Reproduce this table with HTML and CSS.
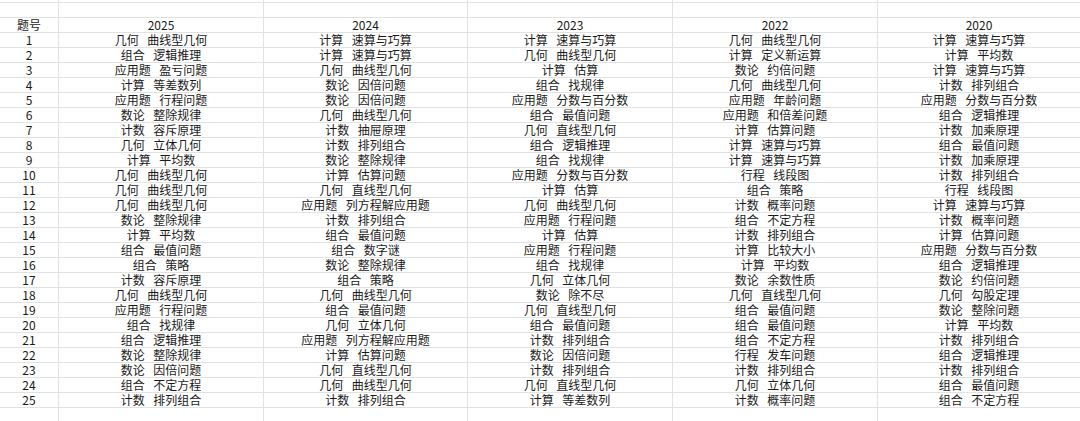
FILE: index.html
```html
<!DOCTYPE html>
<html lang="zh-CN">
<head>
<meta charset="utf-8">
<title>题号统计</title>
<link rel="stylesheet" href="styles.css">
</head>
<body>
<div class="sheet">
  <div class="row top"><div class="c"></div><div class="c"></div><div class="c"></div><div class="c"></div><div class="c"></div><div class="c"></div></div>
  <div class="row"><div class="c"></div><div class="c"></div><div class="c"></div><div class="c"></div><div class="c"></div><div class="c"></div></div>
  <div class="row"><div class="c">题号</div><div class="c">2025</div><div class="c">2024</div><div class="c">2023</div><div class="c">2022</div><div class="c">2020</div></div>
  <div class="row"><div class="c">1</div><div class="c">几何 曲线型几何</div><div class="c">计算 速算与巧算</div><div class="c">计算 速算与巧算</div><div class="c">几何 曲线型几何</div><div class="c">计算 速算与巧算</div></div>
  <div class="row"><div class="c">2</div><div class="c">组合 逻辑推理</div><div class="c">计算 速算与巧算</div><div class="c">几何 曲线型几何</div><div class="c">计算 定义新运算</div><div class="c">计算 平均数</div></div>
  <div class="row"><div class="c">3</div><div class="c">应用题 盈亏问题</div><div class="c">几何 曲线型几何</div><div class="c">计算 估算</div><div class="c">数论 约倍问题</div><div class="c">计算 速算与巧算</div></div>
  <div class="row"><div class="c">4</div><div class="c">计算 等差数列</div><div class="c">数论 因倍问题</div><div class="c">组合 找规律</div><div class="c">几何 曲线型几何</div><div class="c">计数 排列组合</div></div>
  <div class="row"><div class="c">5</div><div class="c">应用题 行程问题</div><div class="c">数论 因倍问题</div><div class="c">应用题 分数与百分数</div><div class="c">应用题 年龄问题</div><div class="c">应用题 分数与百分数</div></div>
  <div class="row"><div class="c">6</div><div class="c">数论 整除规律</div><div class="c">几何 曲线型几何</div><div class="c">组合 最值问题</div><div class="c">应用题 和倍差问题</div><div class="c">组合 逻辑推理</div></div>
  <div class="row"><div class="c">7</div><div class="c">计数 容斥原理</div><div class="c">计数 抽屉原理</div><div class="c">几何 直线型几何</div><div class="c">计算 估算问题</div><div class="c">计数 加乘原理</div></div>
  <div class="row"><div class="c">8</div><div class="c">几何 立体几何</div><div class="c">计数 排列组合</div><div class="c">组合 逻辑推理</div><div class="c">计算 速算与巧算</div><div class="c">组合 最值问题</div></div>
  <div class="row"><div class="c">9</div><div class="c">计算 平均数</div><div class="c">数论 整除规律</div><div class="c">组合 找规律</div><div class="c">计算 速算与巧算</div><div class="c">计数 加乘原理</div></div>
  <div class="row"><div class="c">10</div><div class="c">几何 曲线型几何</div><div class="c">计算 估算问题</div><div class="c">应用题 分数与百分数</div><div class="c">行程 线段图</div><div class="c">计数 排列组合</div></div>
  <div class="row"><div class="c">11</div><div class="c">几何 曲线型几何</div><div class="c">几何 直线型几何</div><div class="c">计算 估算</div><div class="c">组合 策略</div><div class="c">行程 线段图</div></div>
  <div class="row"><div class="c">12</div><div class="c">几何 曲线型几何</div><div class="c">应用题 列方程解应用题</div><div class="c">几何 曲线型几何</div><div class="c">计数 概率问题</div><div class="c">计算 速算与巧算</div></div>
  <div class="row"><div class="c">13</div><div class="c">数论 整除规律</div><div class="c">计数 排列组合</div><div class="c">应用题 行程问题</div><div class="c">组合 不定方程</div><div class="c">计数 概率问题</div></div>
  <div class="row"><div class="c">14</div><div class="c">计算 平均数</div><div class="c">组合 最值问题</div><div class="c">计算 估算</div><div class="c">计数 排列组合</div><div class="c">计算 估算问题</div></div>
  <div class="row"><div class="c">15</div><div class="c">组合 最值问题</div><div class="c">组合 数字谜</div><div class="c">应用题 行程问题</div><div class="c">计算 比较大小</div><div class="c">应用题 分数与百分数</div></div>
  <div class="row"><div class="c">16</div><div class="c">组合 策略</div><div class="c">数论 整除规律</div><div class="c">组合 找规律</div><div class="c">计算 平均数</div><div class="c">组合 逻辑推理</div></div>
  <div class="row"><div class="c">17</div><div class="c">计数 容斥原理</div><div class="c">组合 策略</div><div class="c">几何 立体几何</div><div class="c">数论 余数性质</div><div class="c">数论 约倍问题</div></div>
  <div class="row"><div class="c">18</div><div class="c">几何 曲线型几何</div><div class="c">几何 曲线型几何</div><div class="c">数论 除不尽</div><div class="c">几何 直线型几何</div><div class="c">几何 勾股定理</div></div>
  <div class="row"><div class="c">19</div><div class="c">应用题 行程问题</div><div class="c">组合 最值问题</div><div class="c">几何 直线型几何</div><div class="c">组合 最值问题</div><div class="c">数论 整除问题</div></div>
  <div class="row"><div class="c">20</div><div class="c">组合 找规律</div><div class="c">几何 立体几何</div><div class="c">组合 最值问题</div><div class="c">组合 最值问题</div><div class="c">计算 平均数</div></div>
  <div class="row"><div class="c">21</div><div class="c">组合 逻辑推理</div><div class="c">应用题 列方程解应用题</div><div class="c">计数 排列组合</div><div class="c">组合 不定方程</div><div class="c">计数 排列组合</div></div>
  <div class="row"><div class="c">22</div><div class="c">数论 整除规律</div><div class="c">计算 估算问题</div><div class="c">数论 因倍问题</div><div class="c">行程 发车问题</div><div class="c">组合 逻辑推理</div></div>
  <div class="row"><div class="c">23</div><div class="c">数论 因倍问题</div><div class="c">几何 直线型几何</div><div class="c">计数 排列组合</div><div class="c">计数 排列组合</div><div class="c">计数 排列组合</div></div>
  <div class="row"><div class="c">24</div><div class="c">组合 不定方程</div><div class="c">几何 曲线型几何</div><div class="c">几何 直线型几何</div><div class="c">几何 立体几何</div><div class="c">组合 最值问题</div></div>
  <div class="row"><div class="c">25</div><div class="c">计数 排列组合</div><div class="c">计数 排列组合</div><div class="c">计算 等差数列</div><div class="c">计数 概率问题</div><div class="c">组合 不定方程</div></div>
  <div class="row tail"><div class="c"></div><div class="c"></div><div class="c"></div><div class="c"></div><div class="c"></div><div class="c"></div></div>
</div>
</body>
</html>
```

FILE: styles.css
```css
html, body {
  margin: 0;
  padding: 0;
  background: #ffffff;
}

.sheet {
  width: 1080px;
  height: 421px;
  overflow: hidden;
  font-family: "Noto Sans CJK SC", "Noto Sans", sans-serif;
  font-size: 12px;
  color: #1a1a1a;
}

.row {
  display: grid;
  grid-template-columns: 59px 205px 204px 205px 205px 1fr;
  height: 15px;
}

.row.top {
  height: 3px;
}

.row.tail {
  height: 14px;
}

.c {
  box-sizing: border-box;
  border-right: 1px solid #e2e2e2;
  border-bottom: 1px solid #e2e2e2;
  text-align: center;
  line-height: 14px;
  white-space: nowrap;
  word-spacing: 6px;
}

.row .c:last-child {
  border-right: none;
}

.row.tail .c {
  border-bottom: none;
}
```
